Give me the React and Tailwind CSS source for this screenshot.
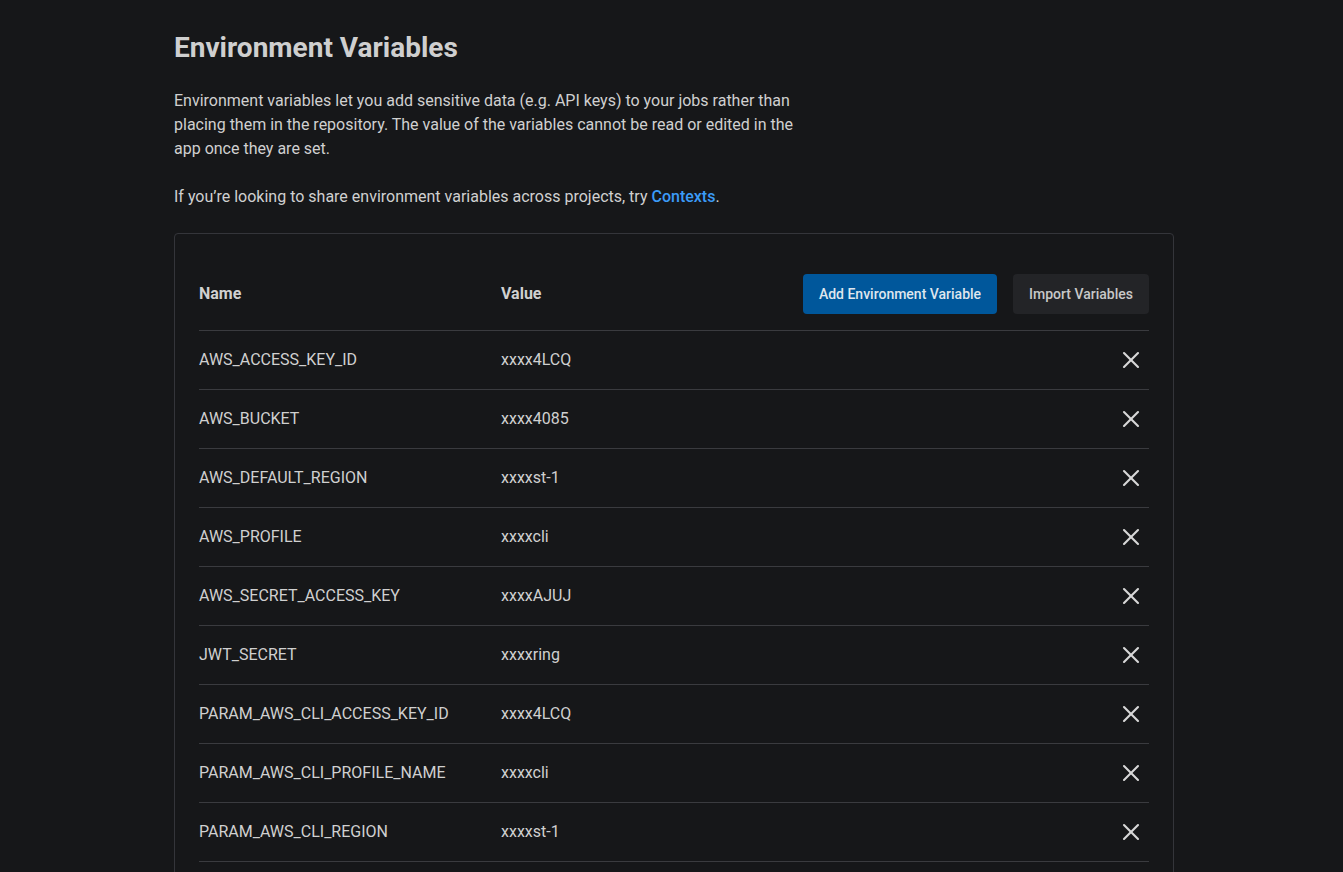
import { X } from "lucide-react";

const vars = [
  ["AWS_ACCESS_KEY_ID", "xxxx4LCQ"],
  ["AWS_BUCKET", "xxxx4085"],
  ["AWS_DEFAULT_REGION", "xxxxst-1"],
  ["AWS_PROFILE", "xxxxcli"],
  ["AWS_SECRET_ACCESS_KEY", "xxxxAJUJ"],
  ["JWT_SECRET", "xxxxring"],
  ["PARAM_AWS_CLI_ACCESS_KEY_ID", "xxxx4LCQ"],
  ["PARAM_AWS_CLI_PROFILE_NAME", "xxxxcli"],
  ["PARAM_AWS_CLI_REGION", "xxxxst-1"],
];

export default function App() {
  return (
    <div
      className="bg-[#161719] text-[#d0d0d0] overflow-hidden h-[872px]"
      style={{ fontFamily: "Roboto, 'Liberation Sans', sans-serif" }}
    >
      <div className="w-[1000px] ml-[174px] pt-[32px]">
        <h1 className="text-[28px] leading-[32px] font-bold text-[#cfcfcf]">
          Environment Variables
        </h1>
        <p className="mt-[25px] max-w-[640px] text-[16px] leading-[24px]">
          Environment variables let you add sensitive data (e.g. API keys) to your jobs rather than
          placing them in the repository. The value of the variables cannot be read or edited in the
          app once they are set.
        </p>
        <p className="mt-[24px] text-[16px] leading-[24px]">
          If you’re looking to share environment variables across projects, try{" "}
          <a className="text-[#3b9bf7] font-medium" href="#">Contexts</a>.
        </p>

        <div className="mt-[24px] border border-[#34353a] rounded-[4px] px-[24px] pt-[40px] pb-[80px]">
          <div className="flex items-center pb-[16px] border-b border-[#3a3b3f]">
            <div className="w-[302px] text-[16px] font-bold">Name</div>
            <div className="flex-1 text-[16px] font-bold">Value</div>
            <div className="flex gap-[16px]">
              <button className="h-[40px] w-[194px] rounded-[4px] bg-[#00579b] text-[14px] font-medium text-[#dfe6ee]">
                Add Environment Variable
              </button>
              <button className="h-[40px] w-[136px] rounded-[4px] bg-[#232427] text-[14px] font-medium text-[#c8c8c8]">
                Import Variables
              </button>
            </div>
          </div>
          {vars.map(([name, value]) => (
            <div key={name} className="flex items-center h-[59px] border-b border-[#3a3b3f] text-[16px]">
              <div className="w-[302px]">{name}</div>
              <div className="flex-1">{value}</div>
              <button className="mr-[4px] text-[#d8d8d8]">
                <X size={28} strokeWidth={1.8} />
              </button>
            </div>
          ))}
        </div>
      </div>
    </div>
  );
}
